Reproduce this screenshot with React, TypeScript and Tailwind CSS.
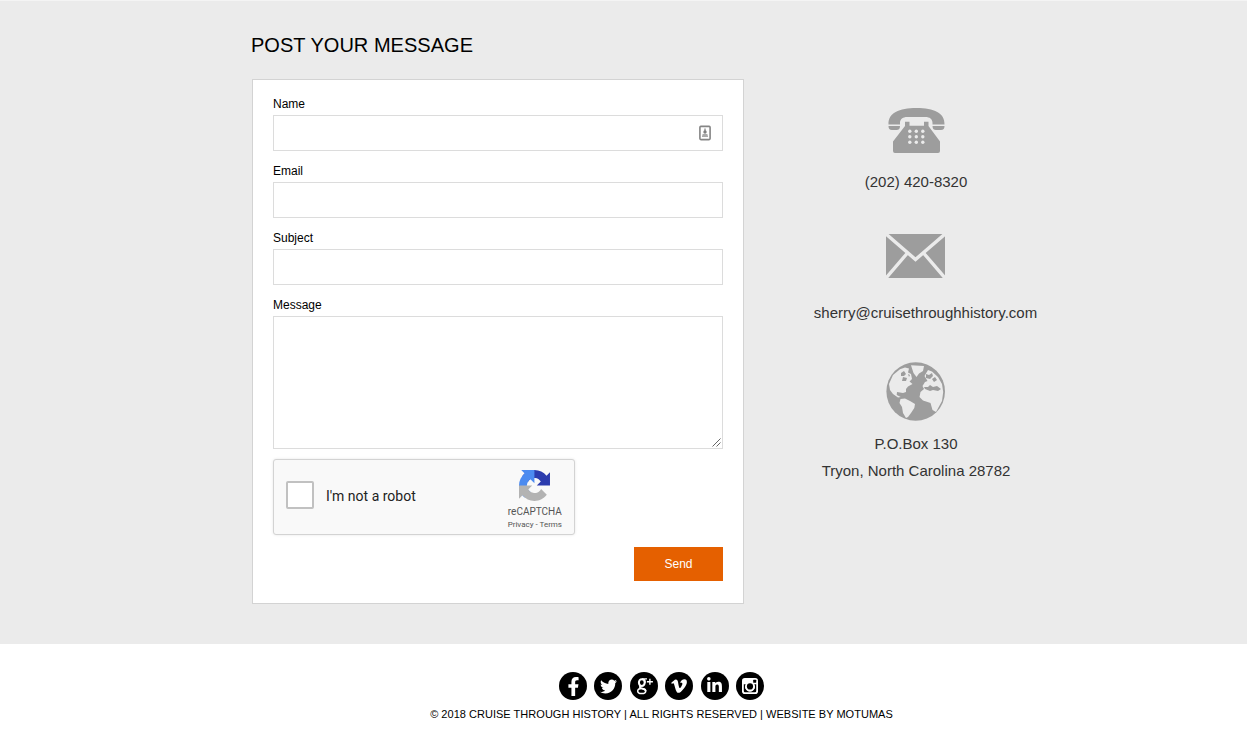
import type { ReactNode } from "react";
import { FaFacebookF, FaTwitter, FaVimeoV, FaLinkedinIn } from "react-icons/fa";

function PhoneIcon() {
  return (
    <svg width="58" height="48" viewBox="0 0 58 48" className="block">
      <path fill="#9d9d9d" d="M1.500 17.500C1 6 12 1 29.500 1S58 6 57.500 17.500H45.500v-1.500c0-4-3-6-7-6H20c-4 0-7 2-7 6v1.500z" />
      <path fill="#9d9d9d" d="M1.500 19H13c0 3-1.500 4-3.500 4H5C2.500 23 1.500 21.500 1.500 19zM45.500 19h12c0 2.500-1 4-3.500 4h-5c-2 0-3.500-1-3.500-4z" />
      <path fill="#9d9d9d" d="M18 14.700h4.500v4H37v-4h4.500V19L53 34.500V44q0 2-2 2H8q-2 0-2-2V34.500L18 19z" />
      <g fill="#ebebeb">
        {[24.300, 29.800, 35.300].map((y) =>
          [22.800, 29.300, 35.800].map((x) => <circle key={`${x}-${y}`} cx={x} cy={y} r="1.700" />),
        )}
      </g>
    </svg>
  );
}

function MailIcon() {
  return (
    <svg width="60" height="44" viewBox="0 0 60 44" className="block">
      <rect width="59" height="44" fill="#9d9d9d" />
      <path d="M0 0l29.500 25.500L59 0M0 44l21.500-25M59 44L37.500 19" fill="none" stroke="#ebebeb" strokeWidth="3.400" />
    </svg>
  );
}

function GlobeIcon() {
  return (
    <svg width="60" height="60" viewBox="0 0 60 60" className="block">
      <circle cx="29.700" cy="29.500" r="29.300" fill="#9d9d9d" />
      <g fill="#ebebeb">
        <path d="M14 7.300L19 5.500 23 6.500 22 10.500 25 12 26 17 23.500 19.500 26.500 22 22 24.500 20 27 20 30 17 31 11 30 10.700 33 14.700 35 12 35.500 7 32 4 28 3 22 7 13z" />
        <path d="M25 3.300L38 4 37 9 33 11.500 30.500 15 27.500 11z" />
        <path d="M14.500 37L19 36.500 24 39 29 42 28.300 46 25 51 22 55 20 56 17 51 16 45 13.500 41z" />
        <path d="M42 8L46 9.500 52 15 56 22 57.200 30 56 39 50 50 46.500 48 44.500 41 37 38.500 33.500 35 34.500 30 38 27 36.500 24 39 20 41.500 19 38.500 14z" />
      </g>
      <g fill="#9d9d9d">
        <path d="M15 11l3-2 2 3-2 2-3 0zM17 15l4 1-1 3-4 0zM22 12l2 1-1 2zM40 12l3 1 3-2 1 3-3 3-4-1zM38 25l4 0 2-2 3 2 4-1 4 3-3 2-5-1-3 1-5-2zM46 17l3-2 2 3-3 2z" />
      </g>
    </svg>
  );
}

function RecaptchaLogo() {
  return (
    <svg width="31" height="31" viewBox="0 0 64 64" className="block">
      <path fill="#2c3cae" d="M64 31.955l-.033-1.370V4.687l-7.160 7.160C50.948 4.674 42.033.093 32.050.093c-10.400 0-19.622 4.960-25.458 12.640l11.736 11.860a15.550 15.550 0 0 1 4.754-5.334c2.050-1.600 4.952-2.906 8.968-2.906.485 0 .860.057 1.135.163 4.976.393 9.288 3.140 11.828 7.124l-8.307 8.307L64 31.953" />
      <path fill="#4c8bf0" d="M31.862.094l-1.370.033H4.594l7.160 7.160C4.580 13.147 0 22.060 0 32.046c0 10.400 4.960 19.622 12.640 25.458L24.500 45.768a15.550 15.550 0 0 1-5.334-4.754c-1.600-2.050-2.906-4.952-2.906-8.968 0-.485.057-.860.163-1.135.393-4.976 3.140-9.288 7.124-11.828l8.307 8.307L31.860.095" />
      <path fill="#b3b3b3" d="M.001 32.045l.033 1.370v25.898l7.160-7.160c5.860 7.173 14.774 11.754 24.760 11.754 10.400 0 19.622-4.960 25.458-12.640l-11.736-11.860a15.550 15.550 0 0 1-4.754 5.334c-2.050 1.600-4.952 2.906-8.968 2.906-.485 0-.860-.057-1.135-.163-4.976-.393-9.288-3.140-11.828-7.124l8.307-8.307-27.297-.010" />
    </svg>
  );
}

function ContactCardIcon() {
  return (
    <svg width="12" height="16" viewBox="0 0 12 16" className="block">
      <rect x="0.900" y="1.400" width="10.200" height="13.200" rx="1" fill="#fff" stroke="#858585" strokeWidth="1.600" />
      <path d="M6 3.500v3" stroke="#aaa" strokeWidth="1.800" />
      <circle cx="6" cy="7" r="1.700" fill="#808080" />
      <path d="M3.500 9.800h5M3 11.300h6" stroke="#aaa" strokeWidth="1.500" />
    </svg>
  );
}

function GooglePlusIcon() {
  return (
    <svg width="28" height="28" viewBox="0 0 28 28" className="block" fill="none" stroke="#fff">
      <ellipse cx="11.800" cy="10.600" rx="2.900" ry="3.400" strokeWidth="2" />
      <path d="M12 6.800h5M14.400 7.500c.8 1 1 2 .5 3.500" strokeWidth="1.300" />
      <path d="M10.800 13.600c-2 1.700-.8 2.400 1.200 2.900 2 .6 3.700 1 3.700 2.700" strokeWidth="1.700" />
      <ellipse cx="11.700" cy="19" rx="4" ry="2.600" strokeWidth="1.500" />
      <path d="M19.900 6.800v6M16.900 9.800h6" strokeWidth="1.400" />
    </svg>
  );
}

function InstagramIcon() {
  return (
    <svg width="28" height="28" viewBox="0 0 28 28" className="block">
      <rect x="6" y="6" width="16" height="16" rx="2.800" fill="#fff" />
      <path d="M7.800 12.200h2.400a4.700 4.700 0 1 0 7.600 0h2.400V19q0 1.200-1.200 1.200H9q-1.200 0-1.200-1.200z" fill="#000" />
      <circle cx="14" cy="14.400" r="4.900" fill="#fff" />
      <circle cx="14" cy="14.400" r="3.100" fill="#000" />
      <rect x="17.200" y="7.700" width="3" height="3" rx=".5" fill="#000" />
    </svg>
  );
}

function Social({ label, children }: { label: string; children: ReactNode }) {
  return (
    <a aria-label={label} className="flex size-7 items-center justify-center rounded-full bg-black text-white">
      {children}
    </a>
  );
}

function Field({ label, children }: { label: string; children?: ReactNode }) {
  return (
    <label className="mb-[11px] block">
      <span className="block h-5 pt-px text-xs leading-4">{label}</span>
      <span className="flex h-9 items-center justify-end border border-[#dcdcdc] bg-white pr-[11px]">{children}</span>
    </label>
  );
}

export default function App() {
  return (
    <div className="h-[730px] overflow-hidden bg-white font-['Liberation_Sans',Arial,sans-serif] text-black">
      <section className="h-[644px] border-t border-[#f4f4f4] bg-[#ebebeb] pl-[252px]">
        <h1 className="-ml-px h-[78px] pt-8 text-[20px] leading-6 tracking-[0.03px] whitespace-nowrap">POST YOUR MESSAGE</h1>
        <div className="flex">
          <form className="h-[525px] w-[492px] border border-[#d3d3d3] bg-white px-5 pt-[15px]">
            <Field label="Name">
              <ContactCardIcon />
            </Field>
            <Field label="Email" />
            <Field label="Subject" />
            <label className="block">
              <span className="block h-5 pt-px text-xs leading-4">Message</span>
              <span className="flex h-[133px] items-end justify-end border border-[#dcdcdc] bg-white p-px">
                <svg width="9" height="9" viewBox="0 0 9 9">
                  <path d="M0.500 8.500L8.500 0.500M4.500 8.500L8.500 4.500" stroke="#555" strokeWidth="0.900" />
                </svg>
              </span>
            </label>
            <div className="mt-[10px] flex h-[76px] w-[302px] justify-between rounded-[3px] border border-[#d3d3d3] bg-[#f9f9f9] pr-3 pl-3 font-[Roboto,sans-serif] shadow-[0_0_3px_rgba(0,0,0,0.1)]">
              <div className="flex items-center gap-3 pb-1">
                <span className="size-7 rounded-[2px] border-2 border-[#c1c1c1] bg-white" />
                <span className="pt-0.5 text-sm text-[#222]">I'm not a robot</span>
              </div>
              <div className="flex flex-col items-center pt-[10px] text-[#555]">
                <RecaptchaLogo />
                <span className="mt-[5px] text-[10px] leading-3">reCAPTCHA</span>
                <span className="mt-[2px] text-[8px] leading-[10px] whitespace-nowrap">Privacy - Terms</span>
              </div>
            </div>
            <div className="mt-3 flex justify-end">
              <button type="button" className="h-[34px] w-[89px] bg-[#e56000] text-xs text-white">
                Send
              </button>
            </div>
          </form>
          <address className="ml-[21px] flex w-[302px] flex-col items-center pt-[28px] text-[15px] leading-[27px] text-[#333] not-italic">
            <PhoneIcon />
            <p className="mt-[13px]">(202) 420-8320</p>
            <div className="mt-[39px]">
              <MailIcon />
            </div>
            <p className="mt-[21px] pl-[19px]">sherry@cruisethroughhistory.com</p>
            <div className="mt-[36px]">
              <GlobeIcon />
            </div>
            <p className="mt-[8px] text-center">
              P.O.Box 130
              <br />
              Tryon, North Carolina 28782
            </p>
          </address>
        </div>
      </section>
      <footer className="flex w-[1323px] flex-col items-center pt-7">
        <div className="flex gap-[7.400px]">
          <Social label="Facebook"><FaFacebookF size={19} /></Social>
          <Social label="Twitter"><FaTwitter size={17} /></Social>
          <Social label="Google Plus"><GooglePlusIcon /></Social>
          <Social label="Vimeo"><FaVimeoV size={18} /></Social>
          <Social label="LinkedIn"><FaLinkedinIn size={17} className="-mt-0.5" /></Social>
          <Social label="Instagram"><InstagramIcon /></Social>
        </div>
        <p className="mt-[6px] text-[11px] leading-4 tracking-[0.025px] whitespace-nowrap">
          © 2018 CRUISE THROUGH HISTORY | ALL RIGHTS RESERVED | WEBSITE BY MOTUMAS
        </p>
      </footer>
    </div>
  );
}
